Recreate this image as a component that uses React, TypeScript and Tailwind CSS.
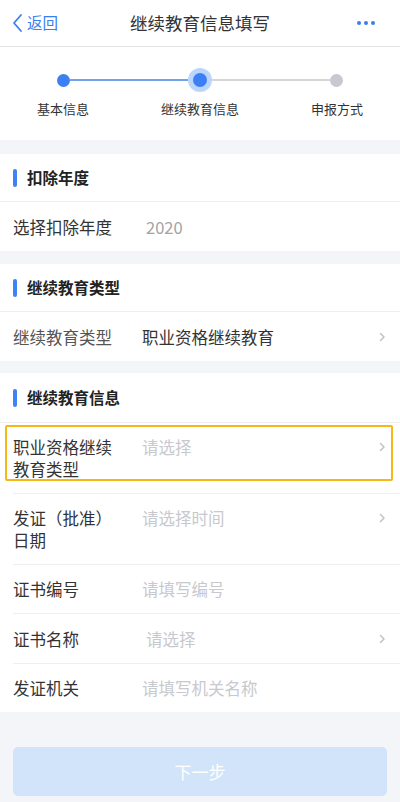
import React from "react";

const font = { fontFamily: '"Noto Sans CJK SC", "Noto Sans", sans-serif' };

function Chevron() {
  return (
    <svg width="7" height="10" viewBox="0 0 7 10" className="shrink-0">
      <path d="M1.5 1.5 L5 5 L1.5 8.5" fill="none" stroke="#c4c4c8" strokeWidth="1.6" strokeLinecap="round" strokeLinejoin="round" />
    </svg>
  );
}

function SectionTitle({ children, h = "h-[48px]" }: { children: React.ReactNode; h?: string }) {
  return (
    <div className={h + " flex items-center border-b border-[#eeeeee]"}>
      <div className="w-[4px] h-[18px] rounded-full bg-[#3f82f4] ml-[13px] mr-[10px]" />
      <span className="text-[15.5px] font-bold text-[#222] leading-none">{children}</span>
    </div>
  );
}

function Row({
  label,
  value,
  placeholder,
  chevron,
  tall,
  divider,
  valueOffset,
  labelColor,
  highlight,
  h,
}: {
  label: string;
  value?: string;
  placeholder?: string;
  chevron?: boolean;
  tall?: boolean;
  divider?: boolean;
  valueOffset?: boolean;
  labelColor?: string;
  highlight?: boolean;
  h?: string;
}) {
  return (
    <div className="relative pl-[13px]">
      <div
        className={
          "flex pr-[14px] " +
          (tall ? "items-start pt-[13px] h-[71px]" : "items-center " + (h ?? "h-[49px]")) +
          (divider ? " border-b border-[#efefef]" : "")
        }
      >
        <div className={"w-[102px] mr-[27px] text-[16.5px] leading-[22px] " + (labelColor ?? "text-[#333]")}>{label}</div>
        <div className={"flex-1 text-[16.5px] leading-[22px] " + (valueOffset ? "ml-[4px] " : "")}>
          {value ? (
            <span className={value === "2020" ? "text-[#a3a3a3]" : "text-[#333]"}>{value}</span>
          ) : (
            <span className="text-[#c7c9ce]">{placeholder}</span>
          )}
        </div>
        {chevron && (
          <div className={tall ? "pt-[6px]" : ""}>
            <Chevron />
          </div>
        )}
      </div>
      {highlight && (
        <div className="absolute left-[5px] right-[7px] top-[2px] bottom-[13px] border-2 border-[#f6b817] rounded-[2px] pointer-events-none" />
      )}
    </div>
  );
}

export default function App() {
  return (
    <div className="w-[400px] h-[802px] bg-[#f4f5f8] flex flex-col overflow-hidden" style={font}>
      {/* header */}
      <div className="h-[47px] shrink-0 bg-white border-b border-[#e3e3e3] grid grid-cols-[1fr_auto_1fr] items-center">
        <div className="flex items-center pl-[12px] text-[#3b7ef0]">
          <svg width="11" height="20" viewBox="0 0 11 20">
            <path d="M9 2 L2 10 L9 18" fill="none" stroke="#3b7ef0" strokeWidth="1.8" strokeLinecap="round" strokeLinejoin="round" />
          </svg>
          <span className="text-[15.5px] ml-[4px] leading-none">返回</span>
        </div>
        <div className="text-[17.5px] text-[#333] leading-none">继续教育信息填写</div>
        <div className="flex justify-end pr-[25px] gap-[3px]">
          <span className="w-[4px] h-[4px] rounded-full bg-[#3b7ef0]" />
          <span className="w-[4px] h-[4px] rounded-full bg-[#3b7ef0]" />
          <span className="w-[4px] h-[4px] rounded-full bg-[#3b7ef0]" />
        </div>
      </div>

      {/* stepper */}
      <div className="h-[93px] shrink-0 bg-white pt-[21px]">
        <div className="flex items-center px-[57px] h-[24px]">
          <div className="w-[13px] h-[13px] rounded-full bg-[#3d80f5]" />
          <div className="flex-1 h-[2px] bg-[#72a2ea]" />
          <div className="w-[24px] h-[24px] rounded-full bg-[#bcd5fa] flex items-center justify-center">
            <div className="w-[14px] h-[14px] rounded-full bg-[#3d80f5]" />
          </div>
          <div className="flex-1 h-[2px] bg-[#d6d6da]" />
          <div className="w-[13px] h-[13px] rounded-full bg-[#c8c8d0]" />
        </div>
        <div className="flex justify-between px-[37px] mt-[8px] text-[13px] text-[#333] leading-[18px]">
          <span>基本信息</span>
          <span>继续教育信息</span>
          <span>申报方式</span>
        </div>
      </div>

      <div className="h-[14px] shrink-0" />

      {/* section 1 */}
      <div className="bg-white shrink-0">
        <SectionTitle>扣除年度</SectionTitle>
        <Row label="选择扣除年度" value="2020" valueOffset />
      </div>

      <div className="h-[13px] shrink-0" />

      {/* section 2 */}
      <div className="bg-white shrink-0">
        <SectionTitle>继续教育类型</SectionTitle>
        <Row label="继续教育类型" value="职业资格继续教育" chevron labelColor="text-[#555]" />
      </div>

      <div className="h-[12px] shrink-0" />

      {/* section 3 */}
      <div className="bg-white shrink-0">
        <SectionTitle h="h-[50px]">继续教育信息</SectionTitle>
        <Row label="职业资格继续教育类型" placeholder="请选择" chevron tall divider highlight />
        <Row label="发证（批准）日期" placeholder="请选择时间" chevron tall divider />
        <Row label="证书编号" placeholder="请填写编号" divider />
        <Row label="证书名称" placeholder="请选择" chevron divider valueOffset h="h-[50px]" />
        <Row label="发证机关" placeholder="请填写机关名称" h="h-[48px]" />
      </div>

      {/* button */}
      <div className="px-[13px] pt-[35px] shrink-0">
        <div className="h-[49px] rounded-[5px] bg-[#d1e4f9] flex items-center justify-center text-white text-[17px]">
          下一步
        </div>
      </div>
    </div>
  );
}
